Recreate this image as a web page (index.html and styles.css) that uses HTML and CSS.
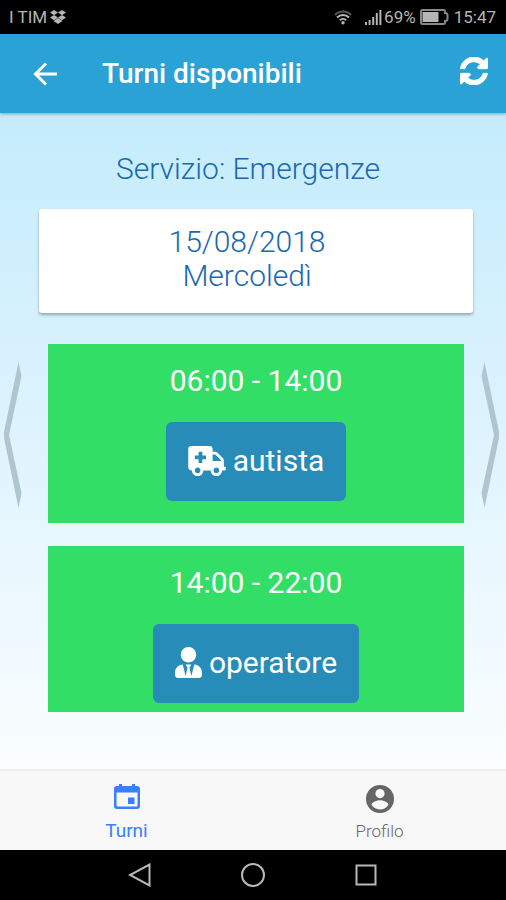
FILE: index.html
```html
<!DOCTYPE html>
<html lang="it">
<head>
  <meta charset="UTF-8">
  <meta name="viewport" content="width=device-width, initial-scale=1">
  <title>Turni disponibili</title>
  <link rel="stylesheet" href="styles.css">
</head>
<body>
  <div class="status-bar">
    <span class="carrier">I TIM</span>
    <svg class="dropbox" width="16" height="14" viewBox="0 0 16 14"><path d="M4 0l4 2.6-4 2.6-4-2.6zM12 0l4 2.6-4 2.6-4-2.6zM4 5l4 2.6-4 2.6L0 7.600zM12 5l4 2.600-4 2.600L8 7.600zM8 8l4.500 2.900L8 14l-4.500-3.100z"/></svg>
    <svg class="wifi" width="18" height="16" viewBox="0 0 18 16">
      <path class="dim" d="M1 6a11 11 0 0 1 16 0"/>
      <path d="M3 8.500a8.500 8.500 0 0 1 12 0M5.800 11.300a4.600 4.600 0 0 1 6.400 0"/>
      <circle cx="9" cy="13.800" r="1.700"/>
    </svg>
    <svg class="signal" width="17" height="16" viewBox="0 0 17 16"><path d="M0 13h2v3H0zM3.600 11h2v5h-2zM7.200 8h2v8h-2zM10.800 4h2v12h-2zM14.400 1h2v15h-2z"/></svg>
    <span class="percent">69%</span>
    <svg class="battery" width="29" height="16" viewBox="0 0 29 16">
      <path class="case" d="M2.500 1h21q1.500 0 1.500 1.500V4q2.500 0 2.500 2v4q0 2-2.500 2v1.500q0 1.500-1.500 1.500h-21Q1 15 1 13.500v-11Q1 1 2.500 1z"/>
      <path d="M2.500 3h16v10h-16z"/>
    </svg>
    <span class="clock">15:47</span>
  </div>

  <header class="toolbar">
    <button class="icon-btn" aria-label="Indietro">
      <svg width="24" height="24" viewBox="0 0 24 24"><path class="back-arrow" d="M24 12H4M13 1.500L2.500 12 13 22.500"/></svg>
    </button>
    <h1>Turni disponibili</h1>
    <button class="icon-btn" aria-label="Aggiorna">
      <svg width="28" height="28" viewBox="0 0 1536 1536"><path class="refresh" d="M1511 928q0 5-1 7-64 268-268 434.500T764 1536q-146 0-282.500-55T238 1324l-129 129q-19 19-45 19t-45-19-19-45V960q0-26 19-45t45-19h448q26 0 45 19t19 45-19 45l-137 137q71 66 161 102t187 36q134 0 250-65t186-179q11-17 53-117 8-23 30-23h192q13 0 22.500 9.500t9.500 22.500zm25-800v448q0 26-19 45t-45 19h-448q-26 0-45-19t-19-45 19-45l138-138Q969 256 768 256q-134 0-250 65T332 500q-11 17-53 117-8 23-30 23H50q-13 0-22.500-9.500T18 608v-7q65-268 270-434.500T768 0q146 0 284 55.500T1297 212l130-129q19-19 45-19t45 19 19 45z"/></svg>
    </button>
  </header>

  <main class="content">
    <h2 class="service">Servizio: Emergenze</h2>
    <div class="date-card">
      <p>15/08/2018</p>
      <p>Mercoledì</p>
    </div>
    <div class="shifts">
      <button class="arrow prev" aria-label="Giorno precedente">
        <svg width="18" height="146" viewBox="0 0 18 146"><path d="M14.500 0L17.500 14 5 73l12.500 58-3 15L0 76v-6z"/></svg>
      </button>
      <div class="shift-list">
        <section class="shift">
          <h3>06:00 - 14:00</h3>
          <button class="role-btn">
            <svg width="38" height="30" viewBox="0 0 640 512"><path d="M624 352h-16V243.900c0-12.700-5.100-24.900-14.100-33.900L494 110.100c-9-9-21.200-14.100-33.900-14.100H416V48c0-26.500-21.500-48-48-48H48C21.500 0 0 21.500 0 48v320c0 26.500 21.500 48 48 48h16c0 53 43 96 96 96s96-43 96-96h128c0 53 43 96 96 96s96-43 96-96h48c8.800 0 16-7.200 16-16v-32c0-8.800-7.200-16-16-16zM160 464c-26.500 0-48-21.500-48-48s21.500-48 48-48 48 21.500 48 48-21.500 48-48 48zm144-248c0 4.400-3.600 8-8 8h-56v56c0 4.400-3.600 8-8 8h-48c-4.400 0-8-3.600-8-8v-56h-56c-4.400 0-8-3.600-8-8v-48c0-4.400 3.600-8 8-8h56v-56c0-4.400 3.600-8 8-8h48c4.400 0 8 3.600 8 8v56h56c4.400 0 8 3.600 8 8v48zm176 248c-26.500 0-48-21.500-48-48s21.500-48 48-48 48 21.500 48 48-21.500 48-48 48zm80-208H416V144h44.100l99.900 99.900V256z"/></svg>
            <span>autista</span>
          </button>
        </section>
        <section class="shift">
          <h3>14:00 - 22:00</h3>
          <button class="role-btn">
            <svg width="27" height="31" viewBox="0 0 448 512"><path d="M224 256c70.700 0 128-57.300 128-128S294.700 0 224 0 96 57.300 96 128s57.300 128 128 128zm95.800 32.600L272 480l-32-136 32-56h-96l32 56-32 136-47.800-191.400C56.900 292 0 350.300 0 422.400V464c0 26.500 21.500 48 48 48h352c26.500 0 48-21.500 48-48v-41.600c0-72.100-56.900-130.400-128.200-133.800z"/></svg>
            <span>operatore</span>
          </button>
        </section>
      </div>
      <button class="arrow next" aria-label="Giorno successivo">
        <svg width="18" height="146" viewBox="0 0 18 146"><path d="M3.500 0L.5 14 13 73 .5 131l3 15L18 76v-6z"/></svg>
      </button>
    </div>
  </main>

  <nav class="tabs">
    <a class="tab active" href="#turni">
      <svg width="28" height="28" viewBox="0 0 28 28"><path fill-rule="evenodd" d="M6 1h3v2h10V1h3v2h2q3 0 3 3v17q0 3-3 3H4q-3 0-3-3V6q0-3 3-3h2zM3.500 9.500v13q0 1 1 1h19q1 0 1-1v-13zM15 14.500h6.500v6.500H15z"/></svg>
      <span>Turni</span>
    </a>
    <a class="tab" href="#profilo">
      <svg width="28" height="28" viewBox="0 0 28 28"><path fill-rule="evenodd" d="M14 0a14 14 0 1 0 0 28 14 14 0 0 0 0-28zm0 4a4.600 4.600 0 1 1 0 9.200A4.600 4.600 0 0 1 14 4zm0 20.500c-3.500 0-6.600-1.900-8.400-4.700 0-2.800 5.600-4.600 8.400-4.600s8.400 1.800 8.400 4.600a10 10 0 0 1-8.400 4.700z"/></svg>
      <span>Profilo</span>
    </a>
  </nav>

  <div class="android-nav">
    <button aria-label="Back"><svg width="24" height="24" viewBox="0 0 24 24"><path d="M21.500 1.500v21L2 12z"/></svg></button>
    <button aria-label="Home"><svg width="24" height="24" viewBox="0 0 24 24"><circle cx="12" cy="12" r="11"/></svg></button>
    <button aria-label="Recenti"><svg width="24" height="24" viewBox="0 0 24 24"><path d="M2.500 2.500h19v19h-19z"/></svg></button>
  </div>
</body>
</html>
```

FILE: styles.css
```css
:root {
  --blue: #2ba2d5;
  --button: #288cb8;
  --green: #33de66;
  --text-blue: #1a69ae;
  --active: #3880ff;
  --status: #b5b5b5;
}
* { margin: 0; padding: 0; box-sizing: border-box; }
body {
  display: flex;
  flex-direction: column;
  min-height: 100vh;
  font-family: Roboto, sans-serif;
  background: #000;
}
button { background: none; border: none; color: inherit; font: inherit; cursor: pointer; }
a { text-decoration: none; color: inherit; }
svg { display: block; flex: none; fill: currentColor; }
h1, h2, h3 { font-weight: 400; }

.status-bar { display: flex; align-items: center; height: 34px; padding: 0 10px 0 9px; color: var(--status); font-size: 17px; }
.dropbox { margin-left: 3px; }
.wifi { margin-left: auto; }
.wifi path { fill: none; stroke: currentColor; stroke-width: 2; }
.wifi .dim { stroke: #555; }
.signal { margin-left: 13px; }
.percent { margin-left: 2px; }
.battery { margin: 0 5px 0 4px; }
.battery .case { fill: none; stroke: #888; stroke-width: 2; }

.toolbar { display: flex; align-items: center; height: 79px; padding: 0 18px 0 33px; background: var(--blue); color: #fff; box-shadow: 0 1px 3px rgba(0,60,90,0.4); z-index: 1; }
.toolbar h1 { flex: 1; margin-left: 45px; font-size: 28px; font-weight: 500; }
.toolbar .icon-btn:last-child { margin-bottom: 6px; }
.back-arrow { fill: none; stroke: #fff; stroke-width: 3; }
.refresh { stroke: #fff; stroke-width: 50; }

.content { flex: 1; padding: 39px 0 48px; background: linear-gradient(#c4ecfc, #d9f2fd 40%, #fbfeff); color: var(--text-blue); font-size: 30px; line-height: 34px; text-align: center; }
.service { padding-right: 10px; font-size: 30px; font-weight: 300; }
.date-card { margin: 23px 33px 31px 39px; padding: 16px 18px 20px 0; background: #fff; border-radius: 3px; box-shadow: 0 2px 3px rgba(0,0,0,0.3); font-weight: 300; }
.shifts { display: flex; align-items: flex-start; }
.arrow { width: 48px; padding: 18px 0 0 4px; color: #b0c6ce; }
.next { width: 42px; padding-left: 17px; }
.shift-list { flex: 1; display: flex; flex-direction: column; gap: 23px; }
.shift { display: flex; flex-direction: column; align-items: center; gap: 24px; padding: 20px 0 22px; background: var(--green); color: #fff; }
.shift:last-child { padding-bottom: 9px; }
.shift h3 { font-size: 30px; }
.role-btn { display: flex; align-items: center; gap: 7px; height: 79px; padding: 0 22px 2px; background: var(--button); border-radius: 6px; }

.tabs { display: flex; height: 81px; background: #f8f8f8; border-top: 2px solid #ebeeef; color: #666; }
.tab { flex: 1; display: flex; flex-direction: column; align-items: center; gap: 6px; padding-top: 14px; font-size: 17px; font-weight: 300; line-height: 24px; }
.active { gap: 8px; padding-top: 12px; color: var(--active); font-size: 19px; font-weight: 400; }

.android-nav { display: flex; justify-content: center; align-items: center; gap: 89px; height: 50px; }
.android-nav svg { fill: none; stroke: #b8b8b8; stroke-width: 2; }
```
